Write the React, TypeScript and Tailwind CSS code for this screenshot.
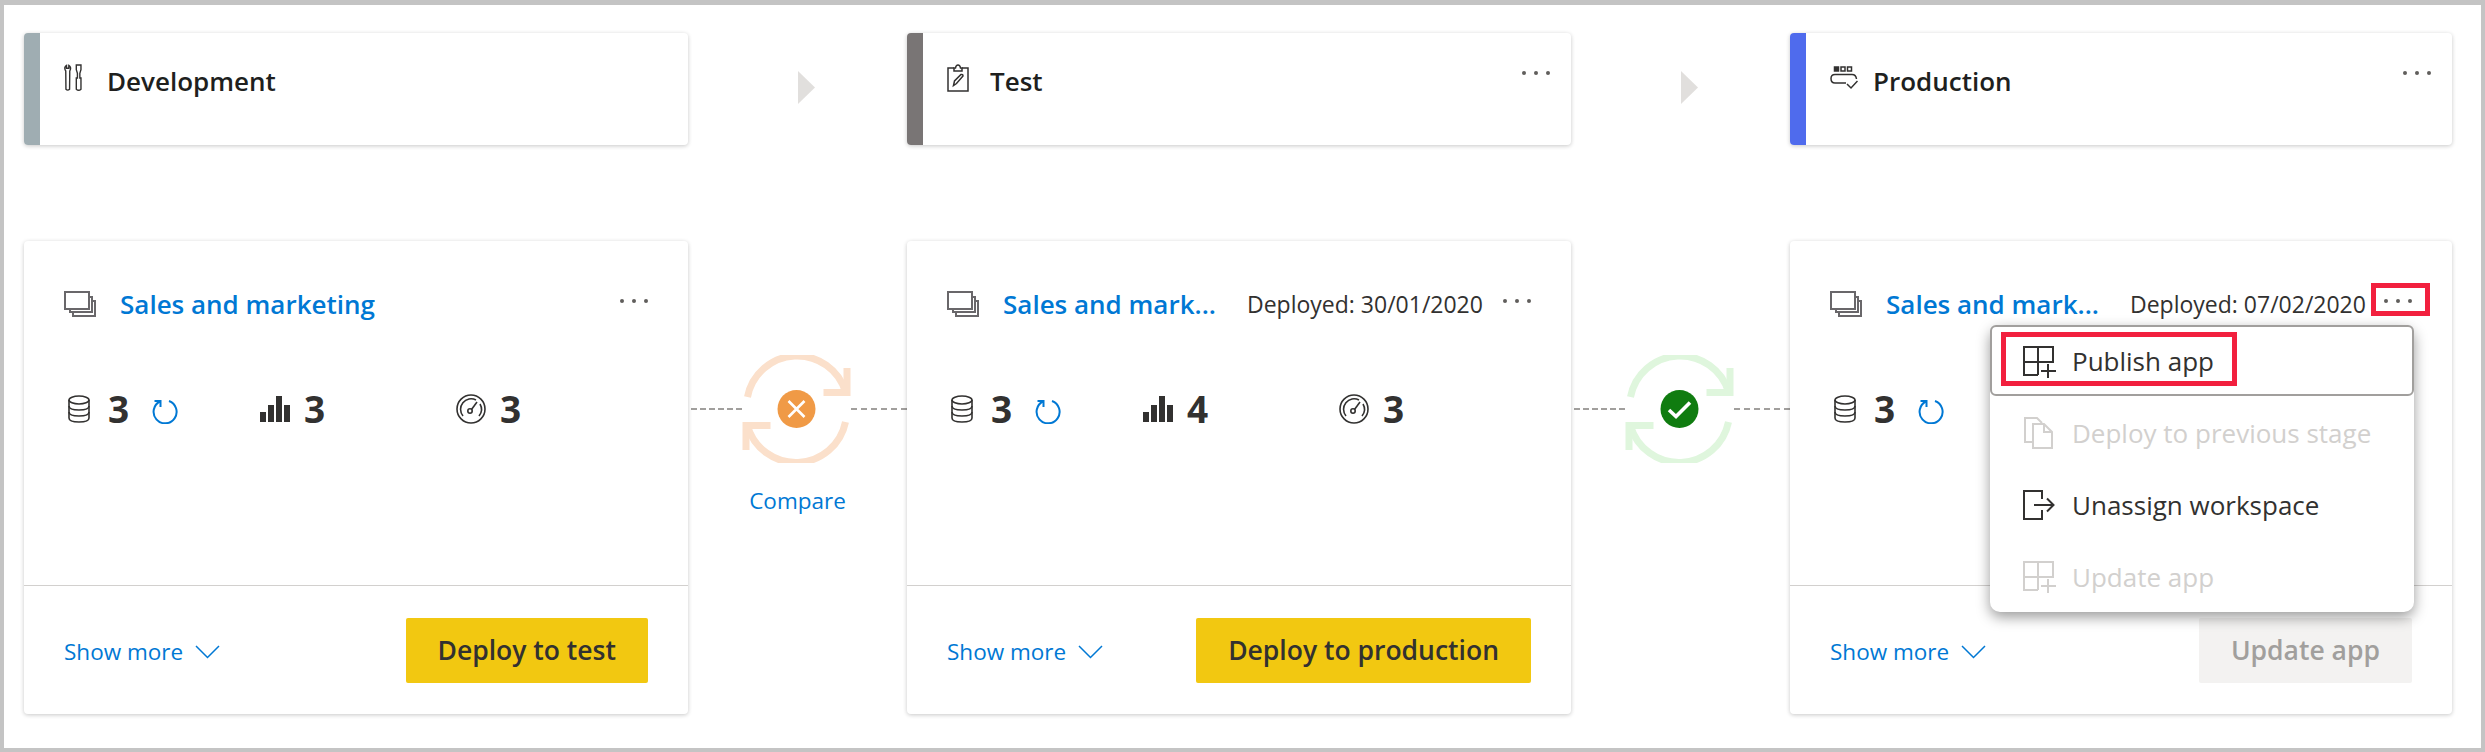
const font = "font-['Open_Sans','Noto_Sans',sans-serif]";

function Dots({ className = '' }: { className?: string }) {
  return (
    <div className={`flex gap-[8px] ${className}`}>
      <span className="w-[4px] h-[4px] rounded-full bg-[#605e5c]" />
      <span className="w-[4px] h-[4px] rounded-full bg-[#605e5c]" />
      <span className="w-[4px] h-[4px] rounded-full bg-[#605e5c]" />
    </div>
  );
}

function ToolsIcon() {
  return (
    <svg width="19" height="28" viewBox="0 0 20 30" fill="none" stroke="#323130" strokeWidth="1.5">
      <path d="M2.5 1.5 V4.5 H5 V1.5 C7 2.5 7.5 5 6 7.5 L5.8 27 Q3.8 29 1.9 27 L1.7 7.5 C0 5 .5 2.5 2.5 1.5 Z" />
      <path d="M13 1 H18 V6 L16.8 10 V15 H18 V27 Q15.5 29.5 13 27 V15 H14.2 V10 L13 6 Z" />
    </svg>
  );
}

function ClipboardIcon() {
  return (
    <svg width="22" height="28" viewBox="0 0 22 28" fill="none" stroke="#323130" strokeWidth="1.5">
      <path d="M7 4 H1 V27 H21 V4 H15" />
      <path d="M7 7 V4 H8.5 Q9 1 11 1 Q13 1 13.5 4 H15 V7 Z" />
      <path d="M6.5 21.5 L7.5 17 L14 10.5 Q16 10 16 12 L9.5 19.5 Z" />
    </svg>
  );
}

function ConveyorIcon() {
  return (
    <svg width="28" height="24" viewBox="0 0 28 24" fill="none" stroke="#323130" strokeWidth="1.5">
      <rect x="4.5" y="1" width="4" height="4" fill="#323130" />
      <rect x="11" y="1" width="4" height="4" />
      <rect x="17.5" y="1" width="4" height="4" />
      <path d="M16 17 H5 Q1 17 1 12.5 Q1 8.5 5 8.5 H22 Q26 8.5 26.5 13" />
      <path d="M5 13 H5.01 M9.5 13 H9.51 M14 13 H14.01 M18.5 13 H18.51" strokeWidth="2.2" />
      <path d="M17 18 L21 22 L27.5 15" />
    </svg>
  );
}

function StackIcon() {
  return (
    <svg width="32" height="26" viewBox="0 0 32 26" fill="none" stroke="#69676a" strokeWidth="2">
      <rect x="1" y="1" width="24" height="17" fill="#fff" />
      <path d="M25 6 H28 V21 H6 V18" />
      <path d="M28 10 H31 V25 H9 V21" />
    </svg>
  );
}

function DbIcon() {
  return (
    <svg width="22" height="28" viewBox="0 0 22 28" fill="none" stroke="#323130" strokeWidth="1.6">
      <ellipse cx="11" cy="5" rx="10" ry="4" />
      <path d="M1 5 V23 C1 25.5 5 27 11 27 C17 27 21 25.5 21 23 V5" />
      <path d="M1 11 C1 13.5 5 15 11 15 C17 15 21 13.5 21 11" />
      <path d="M1 17 C1 19.5 5 21 11 21 C17 21 21 19.5 21 17" />
    </svg>
  );
}

function RefreshIcon() {
  return (
    <svg width="26" height="26" viewBox="0 0 26 26" fill="none" stroke="#0078d4" strokeWidth="2">
      <path d="M8 3.5 A11.5 11.5 0 1 0 17 3" />
      <path d="M8.5 9 V3 H2.5" />
    </svg>
  );
}

function BarsIcon() {
  return (
    <svg width="30" height="26" viewBox="0 0 30 26" fill="#323130">
      <rect x="0" y="16" width="6" height="10" />
      <rect x="8" y="9" width="6" height="17" />
      <rect x="16" y="0" width="6" height="26" />
      <rect x="24" y="9" width="6" height="17" />
    </svg>
  );
}

function GaugeIcon() {
  return (
    <svg width="30" height="30" viewBox="0 0 30 30" fill="none" stroke="#323130" strokeWidth="1.6">
      <circle cx="15" cy="15" r="14" />
      <path d="M7 22 A10.5 10.5 0 0 1 20 6" />
      <path d="M24 10 A10.5 10.5 0 0 1 23 22" />
      <circle cx="14" cy="17" r="2.2" />
      <path d="M15.5 15.5 L21 8" />
    </svg>
  );
}

function AppPlusIcon({ color }: { color: string }) {
  return (
    <svg width="33" height="32" viewBox="0 0 33 32" fill="none" stroke={color} strokeWidth="2">
      <path d="M15 29 H1 V1 H30 V16 H1 M15 1 V29" />
      <path d="M25 18 V32 M18 25 H33" />
    </svg>
  );
}

function CopiesIcon({ color }: { color: string }) {
  return (
    <svg width="30" height="32" viewBox="0 0 30 32" fill="none" stroke={color} strokeWidth="2">
      <path d="M10 25 H2 V1 H14 L19 6" />
      <path d="M10 7 H21 L29 15 V31 H10 Z" />
      <path d="M21 7 V15 H29" />
    </svg>
  );
}

function ExitIcon() {
  return (
    <svg width="32" height="30" viewBox="0 0 32 30" fill="none" stroke="#323130" strokeWidth="2">
      <path d="M19 9 V1 H1 V29 H19 V20" />
      <path d="M11 15 H30 M24 8.5 L30.5 15 L24 21.5" />
    </svg>
  );
}

function SyncIcon({ ring, dot, status }: { ring: string; dot: string; status: 'error' | 'ok' }) {
  return (
    <svg width="109" height="108" viewBox="0 0 108 108" fill="none" className="shrink-0">
      <g stroke={ring} strokeWidth="7">
        <path d="M5 42 A50.5 50.5 0 0 1 103 37" />
        <path d="M104.5 13 V37.5 H81" />
        <path d="M103 67 A50.5 50.5 0 0 1 5 71" />
        <path d="M3.5 95 V70.5 H28" />
      </g>
      <circle cx="54" cy="54" r="19" fill={dot} />
      {status === 'error' ? (
        <path d="M46 46 L62 62 M62 46 L46 62" stroke="#fff" strokeWidth="2.6" />
      ) : (
        <path d="M43.5 55 L50.5 61.5 L64.5 47.5" stroke="#fff" strokeWidth="3.6" />
      )}
    </svg>
  );
}

function StageHeader({ name, accent, icon, menu }: { name: string; accent: string; icon: React.ReactNode; menu?: boolean }) {
  return (
    <div className="flex h-[112px] bg-white rounded-[4px] overflow-hidden shadow-[0_1px_4px_rgba(0,0,0,0.22)]">
      <div className={`w-[16px] ${accent}`} />
      <div className="flex-1 flex items-start pl-[24px] pr-[21px] pt-[30px]">
        <div className="w-[43px] h-[30px] flex items-center">{icon}</div>
        <span className="text-[26px] leading-[36px] font-semibold text-[#201f1e]">{name}</span>
        {menu && <Dots className="ml-auto mt-[8px]" />}
      </div>
    </div>
  );
}

function Stat({ icon, value, gap = 'ml-[18px]' }: { icon: React.ReactNode; value: number; gap?: string }) {
  return (
    <div className="flex items-center h-[40px]">
      {icon}
      <span className={`${gap} text-[37px] leading-[40px] font-bold text-[#323130]`}>{value}</span>
    </div>
  );
}

function PipelineCard({ title, deployed, counts, button, disabled, children }: {
  title: string;
  deployed?: string;
  counts: [number, number, number];
  button: string;
  disabled?: boolean;
  children?: React.ReactNode;
}) {
  return (
    <div className="relative bg-white rounded-[4px] shadow-[0_1px_4px_rgba(0,0,0,0.22)] h-[473px] flex flex-col">
      <div className="h-[345px] border-b border-[#d2d0ce] pt-[46px]">
        <div className="flex items-center h-[34px] pl-[40px] pr-[40px]">
          <div className="w-[56px] shrink-0"><StackIcon /></div>
          <span className={`text-[26px] leading-[34px] font-semibold text-[#0078d4] whitespace-nowrap ${deployed ? 'w-[244px] shrink-0' : ''}`}>{title}</span>
          {deployed && <span className="text-[23px] leading-[34px] text-[#323130] whitespace-nowrap">{deployed}</span>}
          <Dots className="ml-auto mb-[6px]" />
        </div>
        <div className="mt-[68px] pl-[44px] grid grid-cols-[192px_196px_auto]">
          <div className="flex items-center">
            <Stat icon={<DbIcon />} value={counts[0]} />
            <span className="ml-[23px] mt-[4px]"><RefreshIcon /></span>
          </div>
          <Stat icon={<BarsIcon />} value={counts[1]} gap="ml-[14px]" />
          <Stat icon={<GaugeIcon />} value={counts[2]} gap="ml-[14px]" />
        </div>
      </div>
      <div className="flex-1 flex items-center justify-between px-[40px]">
        <div className="flex items-center text-[#0078d4] text-[22.5px] pt-[3px]">
          Show more
          <svg width="25" height="14" viewBox="0 0 25 14" fill="none" stroke="#0078d4" strokeWidth="1.5" className="ml-[12px]">
            <path d="M1 1 L12.5 12.5 L24 1" />
          </svg>
        </div>
        <div className={`h-[65px] px-[32px] pt-[2px] flex items-center rounded-[2px] text-[26.5px] font-semibold ${disabled ? 'bg-[#f3f2f1] text-[#a19f9d]' : 'bg-[#f2c811] text-[#323130]'}`}>
          {button}
        </div>
      </div>
      {children}
    </div>
  );
}

function MenuRow({ icon, label, muted, active }: { icon: React.ReactNode; label: string; muted?: boolean; active?: boolean }) {
  return (
    <div className={`flex items-center ${active ? 'h-[71px] mb-px pl-[31px] pt-[2px] border-2 border-[#a19f9d] rounded-[6px]' : 'h-[72px] pl-[33px]'}`}>
      <div className="w-[49px] flex items-center">{icon}</div>
      <span className={`text-[26px] ${muted ? 'text-[#d2d0ce]' : 'text-[#323130]'}`}>{label}</span>
    </div>
  );
}

function ActionMenu() {
  return (
    <div className="absolute left-[200px] top-[84px] w-[424px] h-[287px] bg-white rounded-[10px] shadow-[0_5px_14px_rgba(0,0,0,0.4)]">
      <MenuRow active icon={<AppPlusIcon color="#323130" />} label="Publish app" />
      <MenuRow muted icon={<CopiesIcon color="#d2d0ce" />} label="Deploy to previous stage" />
      <MenuRow icon={<ExitIcon />} label="Unassign workspace" />
      <MenuRow muted icon={<AppPlusIcon color="#d2d0ce" />} label="Update app" />
      <div className="absolute left-[11px] top-[7px] w-[236px] h-[54px] border-[5px] border-[#f2203e]" />
    </div>
  );
}

function Connector({ ring, dot, status, compare }: { ring: string; dot: string; status: 'error' | 'ok'; compare?: boolean }) {
  return (
    <div className="flex flex-col items-center pt-[114px]">
      <div className="flex items-center w-full">
        <div className="w-[51px] ml-[3px] border-t-2 border-dashed border-[#a19f9d]" />
        <SyncIcon ring={ring} dot={dot} status={status} />
        <div className="flex-1 border-t-2 border-dashed border-[#a19f9d]" />
      </div>
      {compare && <span className="mt-[23px] text-[22.5px] leading-[30px] text-[#0078d4]">Compare</span>}
    </div>
  );
}

function Arrow() {
  return (
    <div className="flex justify-center pl-[17px] pt-[38px]">
      <svg width="17" height="33" viewBox="0 0 17 33"><path d="M0 0 L17 16.5 L0 33 Z" fill="#e1dfdd" /></svg>
    </div>
  );
}

export default function App() {
  return (
    <div className={`w-[2485px] h-[752px] bg-white border-t-[5px] border-l-[4px] border-r-[4px] border-b-[4px] border-[#c4c4c4] pl-[20px] pt-[28px] overflow-hidden ${font}`}>
      <div className="grid grid-cols-[664px_219px_664px_219px_662px]">
        <StageHeader name="Development" accent="bg-[#9fadb2]" icon={<ToolsIcon />} />
        <Arrow />
        <StageHeader name="Test" accent="bg-[#797575]" icon={<ClipboardIcon />} menu />
        <Arrow />
        <StageHeader name="Production" accent="bg-[#4f6bed]" icon={<ConveyorIcon />} menu />
      </div>
      <div className="grid grid-cols-[664px_219px_664px_219px_662px] mt-[96px]">
        <PipelineCard title="Sales and marketing" counts={[3, 3, 3]} button="Deploy to test" />
        <Connector ring="#fbe0cb" dot="#f09a46" status="error" compare />
        <PipelineCard title="Sales and mark..." deployed="Deployed: 30/01/2020" counts={[3, 4, 3]} button="Deploy to production" />
        <Connector ring="#dff6dd" dot="#107c10" status="ok" />
        <PipelineCard title="Sales and mark..." deployed="Deployed: 07/02/2020" counts={[3, 3, 3]} button="Update app" disabled>
          <div className="absolute left-[581px] top-[42px] w-[59px] h-[33px] border-[5px] border-[#f2203e]" />
          <ActionMenu />
        </PipelineCard>
      </div>
    </div>
  );
}
